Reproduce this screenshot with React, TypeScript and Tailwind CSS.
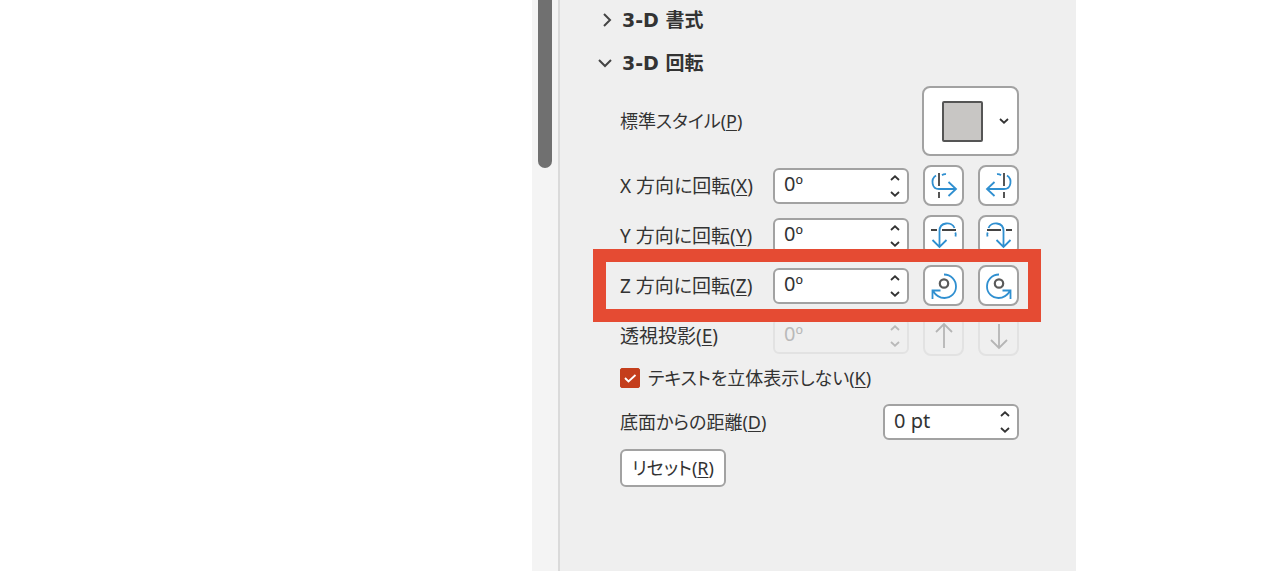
import React, { ReactNode, useState } from 'react';

interface SpinnerProps {
    id: string;
    unit: string;
    disabled?: boolean;
}

function Spinner({ id, unit, disabled = false }: SpinnerProps) {
    const [value, setValue] = useState(`0${unit}`);

    function step(delta: number) {
        setValue(`${(parseFloat(value) || 0) + delta}${unit}`);
    }

    return (
        <div
            className={
                disabled
                    ? 'flex h-9 w-34 items-center rounded-md border-2 border-[#e2e2e2] text-[#b9b9b9]'
                    : 'flex h-9 w-34 items-center rounded-md border-2 border-[#a2a2a2] bg-white text-[#333333]'
            }
        >
            <input
                id={id}
                type="text"
                className="h-7 w-full min-w-0 bg-transparent pb-1 pl-[9px] text-xl leading-6 outline-none"
                value={value}
                disabled={disabled}
                onChange={(e) => setValue(e.target.value)}
            />
            <div className="mr-1 flex flex-col">
                <button type="button" aria-label="+" className="flex h-4 w-4 items-center justify-center" disabled={disabled} onClick={() => step(1)}>
                    <svg width="10" height="6" viewBox="0 0 10 6" fill="none" stroke="currentColor" strokeWidth="1.8">
                        <path d="M1 5 5 1.3 9 5" />
                    </svg>
                </button>
                <button type="button" aria-label="-" className="flex h-4 w-4 items-center justify-center" disabled={disabled} onClick={() => step(-1)}>
                    <svg width="10" height="6" viewBox="0 0 10 6" fill="none" stroke="currentColor" strokeWidth="1.8">
                        <path d="M1 1 5 4.7 9 1" />
                    </svg>
                </button>
            </div>
        </div>
    );
}

// Drawn for the left button, the right one is mirrored
function AxisXIcon() {
    return (
        <>
            <path d="M8 0v13M8 19v6" stroke="#444444" />
            <path d="M11 2.2c1.3-1 2.6-1.2 4-1M5 2.5C-.5 6 .5 16 8 16h17M17.5 9 25 16l-7.5 7" stroke="#2f8fd0" />
        </>
    );
}

function AxisYIcon() {
    return (
        <>
            <path d="M0 7h6M11 7h14" stroke="#444444" />
            <path d="M8.5 24V8C8.500-1.500 21-1.500 23.500 5M24.300 9.500c.6 1.200.6 2.500.2 4M1.500 17l7 7 7-7" stroke="#2f8fd0" />
        </>
    );
}

function AxisZIcon() {
    return (
        <>
            <circle cx="13" cy="10.5" r="4.2" stroke="#5a5a5a" strokeWidth="2.2" />
            <path d="M13 1.5C20 1.500 25 7 25 13.500S20 25 13.500 25C8 25 4.500 22 2 18M1.500 26v-8.500h8" stroke="#2f8fd0" />
        </>
    );
}

interface ToolButtonProps {
    label: string;
    disabled?: boolean;
    mirrored?: boolean;
    children: ReactNode;
}

function ToolButton({ label, disabled, mirrored, children }: ToolButtonProps) {
    return (
        <button
            type="button"
            aria-label={label}
            disabled={disabled}
            className={
                disabled
                    ? 'flex h-[41px] w-[41px] items-center justify-center rounded-lg border-2 border-[#e2e2e2]'
                    : 'flex h-[41px] w-[41px] items-center justify-center rounded-lg border-2 border-[#a2a2a2] bg-white'
            }
        >
            <svg width="28" height="28" viewBox="-1 -1 28 28" fill="none" strokeWidth="1.8">
                <g transform={mirrored ? 'translate(26 0) scale(-1 1)' : undefined}>{children}</g>
            </svg>
        </button>
    );
}

interface RotationRowProps {
    id: string;
    text: string;
    accessKey: string;
    labels: [string, string];
    disabled?: boolean;
    highlighted?: boolean;
    icons: [ReactNode, ReactNode];
    mirrorSecond?: boolean;
}

function RotationRow({ id, text, accessKey, labels, disabled, highlighted, icons, mirrorSecond = true }: RotationRowProps) {
    return (
        <div className="relative flex items-center justify-between text-[19px] leading-6">
            <Label id={id} text={text} accessKey={accessKey} />
            <div className="flex items-center gap-3.5">
                <Spinner id={id} unit="º" disabled={disabled} />
                <ToolButton label={labels[0]} disabled={disabled}>{icons[0]}</ToolButton>
                <ToolButton label={labels[1]} disabled={disabled} mirrored={mirrorSecond}>{icons[1]}</ToolButton>
            </div>
            {highlighted && (
                <div className="pointer-events-none absolute -left-[27px] -right-[22px] -inset-y-4 z-10 border-[13px] border-[#e54b33]" />
            )}
        </div>
    );
}

function Label({ id, text, accessKey }: { id: string; text: string; accessKey: string }) {
    return (
        <label htmlFor={id} className="whitespace-nowrap">
            {text}(<u className="underline-offset-2">{accessKey}</u>)
        </label>
    );
}

function App() {
    const [flat, setFlat] = useState(true);

    return (
        <div className="grid min-h-screen grid-cols-[532fr_28px_516fr_204fr] bg-white font-['Noto_Sans','Noto_Sans_CJK_JP',sans-serif] text-lg leading-6 text-[#333333] [font-feature-settings:'palt']">
            {/* scrollbar */}
            <div className="col-start-2 border-r-2 border-[#dadada] bg-[#f4f4f4] pl-1.5">
                <div className="h-[168px] w-3.5 rounded-b-full bg-[#707070]" />
            </div>

            <section className="bg-[#efefef] pl-[60px] pr-[57px]">
                <h2 className="-ml-6 font-['DejaVu_Sans','Noto_Sans_CJK_JP',sans-serif] text-[19px] font-bold text-[#333333]">
                    <button type="button" className="flex h-10 items-center gap-2">
                        <svg width="18" height="16" viewBox="0 0 18 16" fill="none" stroke="#444444" strokeWidth="2">
                            <path d="m8 2 6 6-6 6" />
                        </svg>
                        3-D 書式
                    </button>
                </h2>
                <h2 className="-ml-6 font-['DejaVu_Sans','Noto_Sans_CJK_JP',sans-serif] text-[19px] font-bold text-[#333333]">
                    <button type="button" className="flex h-[46px] items-center gap-2">
                        <svg width="18" height="16" viewBox="0 0 18 16" fill="none" stroke="#444444" strokeWidth="2">
                            <path d="m3 5 6 6 6-6" />
                        </svg>
                        3-D 回転
                    </button>
                </h2>

                <div className="flex items-center justify-between">
                    <Label id="preset" text="標準スタイル" accessKey="P" />
                    <button id="preset" type="button" className="flex h-[70px] w-[97px] items-center justify-between rounded-lg border-2 border-[#a2a2a2] bg-white pl-[18px] pr-2">
                        <span className="h-[41px] w-[41px] rounded-xs border-2 border-[#555555] bg-[#c8c6c4]" />
                        <svg width="10" height="6" viewBox="0 0 10 6" fill="none" stroke="#333333" strokeWidth="1.8">
                            <path d="M1 1 5 4.7 9 1" />
                        </svg>
                    </button>
                </div>

                <div className="mt-[9px] flex flex-col gap-[9px]">
                    <RotationRow id="rotate-x" text="X 方向に回転" accessKey="X" labels={['左', '右']} icons={[<AxisXIcon />, <AxisXIcon />]} />
                    <RotationRow id="rotate-y" text="Y 方向に回転" accessKey="Y" labels={['上', '下']} icons={[<AxisYIcon />, <AxisYIcon />]} />
                    <RotationRow id="rotate-z" text="Z 方向に回転" accessKey="Z" labels={['時計回り', '反時計回り']} icons={[<AxisZIcon />, <AxisZIcon />]} highlighted />
                    <RotationRow
                        id="perspective"
                        text="透視投影"
                        accessKey="E"
                        labels={['狭く', '広く']}
                        disabled
                        mirrorSecond={false}
                        icons={[
                            <path d="M13 25V1M5 9l8-8 8 8" stroke="#b5b5b5" />,
                            <path d="M13 1v24M5 17l8 8 8-8" stroke="#b5b5b5" />
                        ]}
                    />
                </div>

                <div className="flex h-11 items-center gap-2">
                    <span className="relative h-5 w-5">
                        <input
                            id="keep-flat"
                            type="checkbox"
                            className="peer block h-5 w-5 appearance-none rounded-xs border border-[#c43e1c] bg-white checked:bg-[#c43e1c]"
                            checked={flat}
                            onChange={(e) => setFlat(e.target.checked)}
                        />
                        <svg className="pointer-events-none absolute inset-0 hidden peer-checked:block" width="20" height="20" viewBox="0 0 20 20" fill="none" stroke="white" strokeWidth="1.8">
                            <path d="m5 10 3.5 3.5L15.500 7" />
                        </svg>
                    </span>
                    <Label id="keep-flat" text="テキストを立体表示しない" accessKey="K" />
                </div>

                <div className="flex items-center justify-between pt-1">
                    <Label id="distance" text="底面からの距離" accessKey="D" />
                    <Spinner id="distance" unit=" pt" />
                </div>

                <button type="button" className="mt-[9px] h-[38px] rounded-md border-2 border-[#a2a2a2] bg-white px-2.5">
                    リセット(<u className="underline-offset-2">R</u>)
                </button>
            </section>
        </div>
    );
}

export default App;
